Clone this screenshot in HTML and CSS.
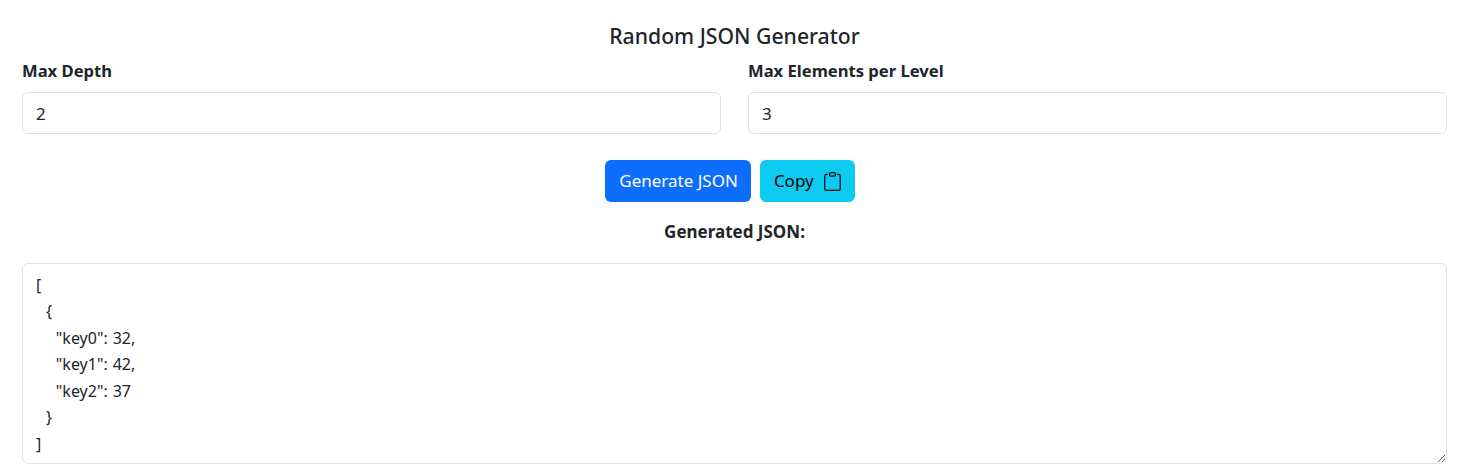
FILE: index.html
```html
<!DOCTYPE html>
<html lang="en">
<head>
    <meta charset="UTF-8">
    <meta name="viewport" content="width=device-width, initial-scale=1.0">
    <title>Random JSON Generator</title>
    <link rel="stylesheet" href="styles.css">
</head>
<body>
    <div class="container">
        <h1>Random JSON Generator</h1>
        <div class="fields">
            <div class="field">
                <label for="depth">Max Depth</label>
                <input id="depth" type="number" value="2">
            </div>
            <div class="field">
                <label for="elements">Max Elements per Level</label>
                <input id="elements" type="number" value="3">
            </div>
        </div>
        <div class="actions">
            <button class="btn btn-primary" type="button">Generate JSON</button>
            <button class="btn btn-info" type="button">Copy
                <svg width="19" height="19" viewBox="0 0 16 16" fill="currentColor" aria-hidden="true">
                    <path d="M4 1.5H3a2 2 0 0 0-2 2V14a2 2 0 0 0 2 2h10a2 2 0 0 0 2-2V3.5a2 2 0 0 0-2-2h-1v1h1a1 1 0 0 1 1 1V14a1 1 0 0 1-1 1H3a1 1 0 0 1-1-1V3.5a1 1 0 0 1 1-1h1v-1z"/>
                    <path d="M9.5 1a.5.5 0 0 1 .5.5v1a.5.5 0 0 1-.5.5h-3a.5.5 0 0 1-.5-.5v-1a.5.5 0 0 1 .5-.5h3zm-3-1A1.5 1.5 0 0 0 5 1.5v1A1.5 1.5 0 0 0 6.5 4h3A1.5 1.5 0 0 0 11 2.5v-1A1.5 1.5 0 0 0 9.5 0h-3z"/>
                </svg>
            </button>
        </div>
        <h2>Generated JSON:</h2>
        <textarea readonly>[
  {
    "key0": 32,
    "key1": 42,
    "key2": 37
  }
]</textarea>
    </div>
</body>
</html>
```

FILE: styles.css
```css
*{
    margin: 0;
    padding: 0;
    box-sizing: border-box;
}
body{
    background-color: #fff;
    color: #212529;
    font-family: "Noto Sans", "Open Sans", sans-serif;
    font-size: 16px;
    line-height: 24px;
    overflow: hidden;
}
.container{
    padding: 20px 13px 0 22px;
}
h1{
    font-size: 21.2px;
    font-weight: 500;
    line-height: 32px;
    text-align: center;
    margin-bottom: 7px;
}
.fields{
    display: grid;
    grid-template-columns: 1fr 1fr;
    gap: 27px;
}
label{
    display: block;
    font-size: 16.6px;
    font-weight: 700;
    margin-bottom: 9px;
}
input,textarea{
    display: block;
    width: 100%;
    font: inherit;
    color: #212529;
    background-color: #fff;
    border: 1px solid #dee2e6;
    border-radius: 6px;
    padding: 8px 13px;
}
input{
    height: 42px;
    font-size: 17px;
}
.actions{
    display: flex;
    justify-content: center;
    gap: 9px;
    margin-top: 26px;
    padding-right: 9px;
}
.btn{
    display: flex;
    align-items: center;
    gap: 9px;
    height: 42px;
    padding: 0 13px 0 14px;
    font: inherit;
    font-size: 17px;
    border: none;
    border-radius: 6px;
    cursor: pointer;
}
.btn-primary{
    background-color: #0d6efd;
    color: #fff;
}
.btn-info{
    background-color: #0dcaf0;
    color: #000;
}
h2{
    font-size: 17px;
    font-weight: 700;
    line-height: 24px;
    text-align: center;
    margin-top: 18px;
    margin-bottom: 19px;
}
textarea{
    height: 201px;
    line-height: 26.5px;
    padding: 7.5px 13px 6px;
    word-spacing: 0.8px;
    resize: vertical;
}
```
